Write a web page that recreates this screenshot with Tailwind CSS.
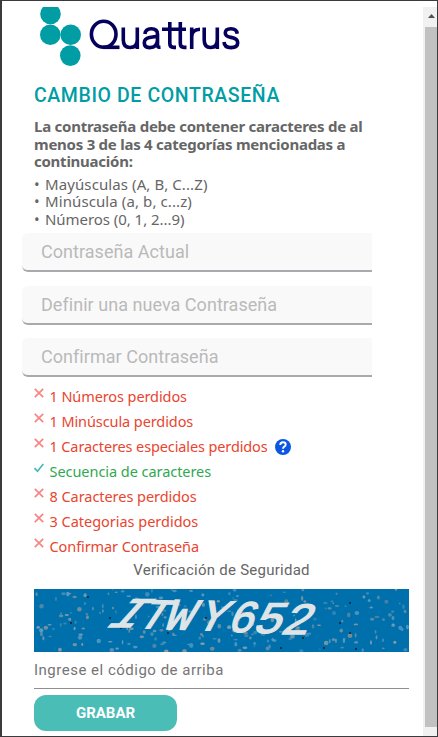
<!DOCTYPE html>
<html lang="es">
<head>
<meta charset="utf-8">
<title>Cambio de contraseña</title>
<script src="https://cdn.jsdelivr.net/npm/@tailwindcss/browser@4"></script>
</head>
<body class="w-[438px] h-[737px] overflow-hidden bg-white">
<div class="flex w-[438px] h-[737px] border-l-2 border-t border-r border-b border-[#3b3b3d] overflow-hidden font-['Noto_Sans','Open_Sans',sans-serif] text-[#666]">
  <main class="w-[421px] shrink-0 pl-8 whitespace-nowrap">
    <svg class="block mt-[6px] h-[60px] w-[220px]" viewBox="34 7 220 60">
      <g fill="#009da5"><circle cx="50.5" cy="14" r="10.3"/><circle cx="50.3" cy="34.8" r="10.3"/><circle cx="70.7" cy="34.8" r="10.3"/><circle cx="70.3" cy="55.6" r="10.3"/></g>
      <g fill="none" stroke="#05005b" stroke-width="3.6">
        <ellipse cx="103.7" cy="34.3" rx="12.3" ry="13"/><path d="M103 47.3H119.5"/>
        <path d="M123.3 27.5V40Q123.3 47.5 130 47.5Q137.3 47.5 137.3 39.5M137.3 27.5V49"/>
        <path d="M144.9 34Q145.5 28.7 151.2 28.7Q157.5 28.7 157.5 34V45.5Q157.5 47.5 160.5 47.3M157.5 36.2L149.5 37.5Q144.3 38.5 144.3 42.8Q144.3 47.6 149.5 47.6Q157.5 47.6 157.5 39.5"/>
        <path d="M162 29.3H186M169.8 22V43.5Q169.8 47.4 173.5 47.4H176M180.3 22V43.5Q180.3 47.4 184 47.4H186.5"/>
        <path d="M191.7 49V27.5M191.7 37Q191.7 29.4 200 29.3"/>
        <path d="M204.2 27.5V40Q204.2 47.5 210.5 47.5Q217.3 47.5 217.3 39.5M217.3 27.5V49"/>
        <path d="M237.2 33.8Q236.7 28.8 231 28.8Q225.3 28.8 225.3 33Q225.3 36.5 231 37.4Q237.7 38.5 237.7 42.8Q237.7 47.6 231 47.6Q224.4 47.6 224 42"/>
      </g>
    </svg>
    <h1 class="mt-[17px] h-6 leading-6 font-['Roboto',sans-serif] font-medium text-[19.5px] tracking-[0.6px] text-[#009da5]">CAMBIO DE CONTRASEÑA</h1>
    <div class="mt-[10px] font-bold text-[15px] leading-[17.5px] tracking-[-0.25px]">
      <p>La contraseña debe contener caracteres de al</p>
      <p>menos 3 de las 4 categorías mencionadas a</p>
      <p>continuación:</p>
    </div>
    <ul class="mt-[5px] text-[15px] leading-[17.5px] tracking-[0.1px]">
      <li class="flex"><span class="w-[11px]">•</span><span>Mayúsculas (A, B, C...Z)</span></li>
      <li class="flex"><span class="w-[11px]">•</span><span>Minúscula (a, b, c...z)</span></li>
      <li class="flex"><span class="w-[11px]">•</span><span class="tracking-[-0.05px]">Números (0, 1, 2...9)</span></li>
    </ul>
    <form class="-ml-3 mt-[5px] w-[350px] font-['Roboto',sans-serif] text-[18px] leading-[37px] tracking-[0.04px] text-[#b9b9b9]">
      <div class="h-[39px] pl-[19px] bg-[#f9f9f9] border-b-2 border-[#aaa9ae] rounded-l-[6px]">Contraseña Actual</div>
      <div class="mt-[14px] h-[39px] pl-[19px] bg-[#f9f9f9] border-b-2 border-[#aaa9ae] rounded-l-[6px]">Definir una nueva Contraseña</div>
      <div class="mt-[13px] h-[39px] pl-[19px] bg-[#f9f9f9] border-b-2 border-[#aaa9ae] rounded-l-[6px]">Confirmar Contraseña</div>
    </form>
    <svg class="hidden"><symbol id="x" viewBox="0 0 10 10"><path d="M.8 .8L9.2 9.2M9.2 .8L.8 9.2" fill="none" stroke="#f98583" stroke-width="1.7"/></symbol><symbol id="v" viewBox="0 0 10 10"><path d="M.5 5L3.5 8.2L9.3 1" fill="none" stroke="#3fb9b6" stroke-width="1.6"/></symbol></svg>
    <ul class="mt-[7px] text-[14.5px] leading-[25px] tracking-[-0.09px] text-[#e9452f]">
      <li class="flex h-[25px]"><svg class="mt-[4px] mr-[5.5px] size-[10px]"><use href="#x"/></svg><span>1 Números perdidos</span></li>
      <li class="flex h-[25px]"><svg class="mt-[4px] mr-[5.5px] size-[10px]"><use href="#x"/></svg><span>1 Minúscula perdidos</span></li>
      <li class="flex h-[25px]"><svg class="mt-[4px] mr-[5.5px] size-[10px]"><use href="#x"/></svg><span class="tracking-[-0.12px]">1 Caracteres especiales perdidos</span><svg class="ml-[7px] mt-[5px] size-4" viewBox="0 0 16 16"><circle cx="8" cy="8" r="8" fill="#0b57e3"/><path d="M5.2 6Q5.3 3.3 8 3.3Q10.7 3.3 10.7 5.6Q10.7 7 9.3 7.7Q8 8.4 8 9.7" fill="none" stroke="#fff" stroke-width="1.9"/><circle cx="8" cy="12.3" r="1.2" fill="#fff"/></svg></li>
      <li class="flex h-[25px] text-[#2fa84f]"><svg class="mt-[4px] mr-[5.5px] size-[10px]"><use href="#v"/></svg><span class="tracking-[-0.05px]">Secuencia de caracteres</span></li>
      <li class="flex h-[25px]"><svg class="mt-[4px] mr-[5.5px] size-[10px]"><use href="#x"/></svg><span class="tracking-[-0.05px]">8 Caracteres perdidos</span></li>
      <li class="flex h-[25px]"><svg class="mt-[4px] mr-[5.5px] size-[10px]"><use href="#x"/></svg><span class="tracking-[-0.02px]">3 Categorias perdidos</span></li>
      <li class="flex h-[25px]"><svg class="mt-[4px] mr-[5.5px] size-[10px]"><use href="#x"/></svg><span>Confirmar Contraseña</span></li>
    </ul>
    <p class="w-[375px] text-center h-5 leading-5 mt-[1px] font-['Roboto',sans-serif] text-[15px] tracking-[0.25px]">Verificación de Seguridad</p>
    <svg class="block mt-[9px] w-[375px] h-[63px] bg-[#0070ad]" viewBox="34 589 375 63">
      <g id="dots"></g>
      <g fill="#dfe4e6" stroke="#dfe4e6" stroke-width="1.2" font-family="Liberation Mono" font-weight="400" font-size="40">
        <text transform="matrix(1.35 0 -.95 1.05 103 627)">I</text>
        <text transform="matrix(1.15 .03 -.7 1.05 134 628)">T</text>
        <text transform="matrix(1.15 .03 -.5 1.1 162 629)">W</text>
        <text transform="matrix(1.15 .03 -.55 1.1 194 630)">Y</text>
        <text transform="matrix(1.1 0 -.42 1.12 226 632)">6</text>
        <text transform="matrix(1.2 0 -.5 1.12 251 633)">5</text>
        <text transform="matrix(1.2 0 -.5 1.12 279 634)">2</text>
      </g>
    </svg>
    <div class="w-[375px] h-[37px] pt-[6px] border-b border-[#8f8f8f] font-['Roboto',sans-serif] text-[15px] leading-6 tracking-[0.5px] text-[#757575]">Ingrese el código de arriba</div>
    <button class="block mt-[6px] w-[143px] h-[36px] rounded-[12px] bg-[#4bbdb7] text-center font-['Roboto',sans-serif] font-bold text-[15px] leading-[36px] text-white">GRABAR</button>
  </main>
  <aside class="mt-[6px] w-[14px] shrink-0 bg-[#f1f1f1] pl-[2px]">
    <svg class="block w-3 h-5" viewBox="0 0 12 20"><path d="M3 11L6.5 7L10 11Z" fill="#505050"/></svg>
    <div class="h-[700px] bg-[#c1c1c1]"></div>
  </aside>
</div>
<script>
// Deterministic speckles over the captcha background
let s=17;const r=()=>(s=(s*16807)%2147483647)/2147483647;
const c=['#7fa0b4','#8b9398','#5f9fc2','#9a9c9c','#4a93bf'];let h='';
for(let i=0;i<230;i++){const a=.7+r()*1.7;h+=`<ellipse cx="${34+r()*375}" cy="${589+r()*63}" rx="${a}" ry="${.7+r()*1.8}" fill="${c[Math.floor(r()*5)]}" opacity="${.5+r()*.45}"/>`}
for(const [x,y] of [[88,597],[71,623],[110,618],[121,628],[168,633],[206,618],[303,638],[350,603],[340,623],[350,633],[324,648],[281,648],[356,649]])h+=`<circle cx="${x}" cy="${y}" r="1" fill="#112238"/>`;
document.getElementById('dots').innerHTML=h;
</script>
</body>
</html>
